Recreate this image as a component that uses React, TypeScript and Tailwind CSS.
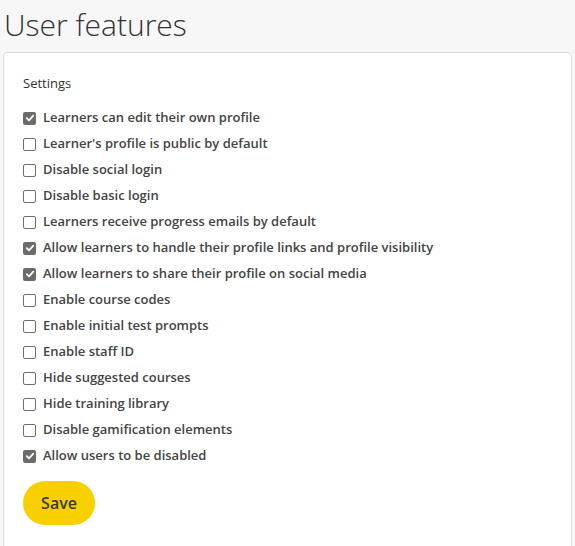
const settings: { label: string; checked: boolean }[] = [
  { label: "Learners can edit their own profile", checked: true },
  { label: "Learner's profile is public by default", checked: false },
  { label: "Disable social login", checked: false },
  { label: "Disable basic login", checked: false },
  { label: "Learners receive progress emails by default", checked: false },
  { label: "Allow learners to handle their profile links and profile visibility", checked: true },
  { label: "Allow learners to share their profile on social media", checked: true },
  { label: "Enable course codes", checked: false },
  { label: "Enable initial test prompts", checked: false },
  { label: "Enable staff ID", checked: false },
  { label: "Hide suggested courses", checked: false },
  { label: "Hide training library", checked: false },
  { label: "Disable gamification elements", checked: false },
  { label: "Allow users to be disabled", checked: true },
];

function Box({ checked }: { checked: boolean }) {
  if (checked) {
    return (
      <span className="flex size-[13px] shrink-0 items-center justify-center rounded-[2px] bg-[#6b6b6b]">
        <svg width="10" height="10" viewBox="0 0 10 10" fill="none">
          <path d="M1.8 5.2 L4 7.4 L8.3 2.6" stroke="#fff" strokeWidth="1.8" strokeLinecap="round" strokeLinejoin="round" />
        </svg>
      </span>
    );
  }
  return <span className="size-[13px] shrink-0 rounded-[2px] border border-[#6f6f6f] bg-white" />;
}

export default function App() {
  return (
    <div className="min-h-[546px] overflow-hidden bg-[#f7f7f7] px-[3px] font-['Open_Sans',sans-serif] text-[#333]">
      <h1 className="pt-[5px] pl-[1px] text-[30px] leading-[40px] font-light text-[#333] mb-[7px]">User features</h1>
      <div className="h-[520px] rounded-[4px] border border-[#dcdcdc] bg-white pt-[21px] pl-[19px]">
        <div className="mb-[13px] text-[13px] leading-[18px] text-[#333]">Settings</div>
        <ul className="flex flex-col">
          {settings.map((s) => (
            <li key={s.label} className="flex h-[26px] items-center gap-[7px] text-[13px] font-semibold text-[#444]">
              <Box checked={s.checked} />
              <span>{s.label}</span>
            </li>
          ))}
        </ul>
        <button className="mt-[12px] flex h-[44px] w-[72px] items-center justify-center rounded-full bg-[#f8d000] text-[16px] font-semibold text-[#3a3a2a]">
          Save
        </button>
      </div>
    </div>
  );
}
